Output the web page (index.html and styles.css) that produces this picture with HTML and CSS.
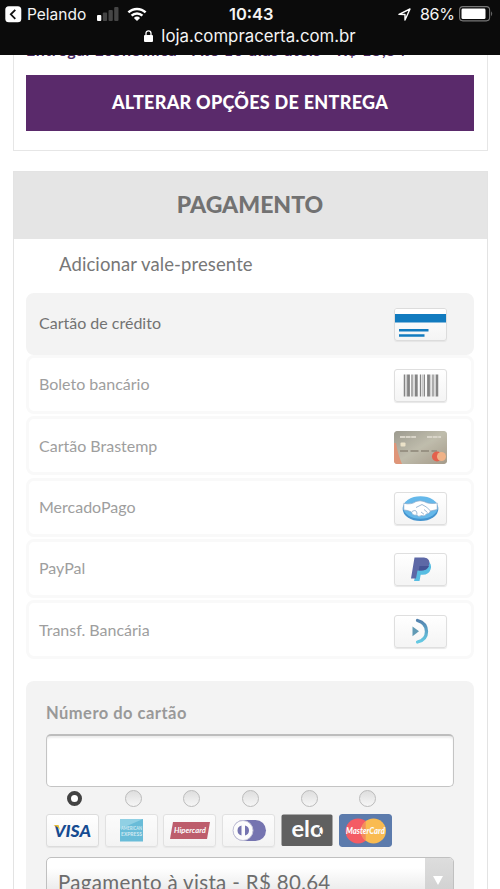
FILE: index.html
```html
<!DOCTYPE html>
<html lang="pt-BR">
<head>
<meta charset="utf-8">
<title>Compra Certa - Pagamento</title>
<link rel="stylesheet" href="styles.css">
</head>
<body>
<header class="browser-bar">
  <div class="status">
    <div class="status-left">
      <svg class="back" width="17" height="17" viewBox="0 0 17 17"><rect x=".3" y=".3" width="16" height="16" rx="3.5" fill="#fff"/><path d="M10.3 3.8 5.8 8.3l4.5 4.5" fill="none" stroke="#111" stroke-width="1.8"/></svg>
      <span class="app">Pelando</span>
      <svg class="signal" width="22" height="14" viewBox="0 0 22 14"><rect y="8" width="4.3" height="6" rx="1" fill="#fff"/><g fill="#454545"><rect x="5.8" y="5.5" width="4.3" height="8.5" rx="1"/><rect x="11.5" y="3" width="4.3" height="11" rx="1"/><rect x="17.2" width="4.3" height="14" rx="1"/></g></svg>
      <svg class="wifi" width="20" height="14" viewBox="0 0 20 14"><g fill="none" stroke="#fff" stroke-width="2.5"><path d="M1.4 5.4a12.3 12.3 0 0 1 17.2 0"/><path d="M4.6 8.7a7.7 7.7 0 0 1 10.8 0"/></g><path d="M6.9 10.9a4.4 4.4 0 0 1 6.2 0L10 14z" fill="#fff"/></svg>
    </div>
    <span class="clock">10:43</span>
    <div class="status-right">
      <svg class="location" width="13" height="13" viewBox="0 0 13 13"><path d="M1 6.4 12 1 7 12V6.5z" fill="none" stroke="#fff" stroke-width="1.4" stroke-linejoin="round"/></svg>
      <span class="percent">86%</span>
      <svg class="battery" width="35" height="16" viewBox="0 0 35 16"><rect x=".6" y=".6" width="30" height="14.3" rx="3.3" fill="none" stroke="#777" stroke-width="1.1"/><rect x="2.5" y="2.5" width="24" height="10.6" rx="1.4" fill="#fff"/><path d="M32.2 5.3q2 2.4 0 4.9z" fill="#777"/></svg>
    </div>
  </div>
  <div class="address">
    <svg width="9" height="12" viewBox="0 0 9 12"><rect y="5" width="9" height="7" rx="1" fill="#fff"/><path d="M2 5.5V3.3a2.5 2.5 0 0 1 5 0v2.2" fill="none" stroke="#fff" stroke-width="1.3"/></svg>
    <span>loja.compracerta.com.br</span>
  </div>
</header>
<main>
  <section class="delivery">
    <p class="shipping">Entrega: Econômica - Até 10 dias úteis - R$ 15,54</p>
    <button class="change"><span>ALTERAR OPÇÕES DE ENTREGA</span></button>
  </section>
  <section class="payment">
    <h2><span>PAGAMENTO</span></h2>
    <p class="voucher"><span>Adicionar vale-presente</span></p>
    <ul class="methods">
      <li class="method selected"><span>Cartão de crédito</span>
        <svg class="tile" viewBox="1 1 51 31"><rect width="53" height="8" fill="#fff"/><rect y="6" width="53" height="8.5" fill="#127bbf"/><path d="M5 22.2h29.500M5 27.500h25.500" stroke="#127bbf" stroke-width="2.500"/></svg></li>
      <li class="method"><span>Boleto bancário</span>
        <svg class="tile" viewBox="1 1 51 31"><g stroke="#777"><path d="M10.500 5.500v22" stroke-width="1.500"/><path d="M14.500 5.500v22M22.300 5.500v22M34.500 5.500v22" stroke-width="2.800"/><path d="M18 5.500v22M26.500 5.500v22M30.300 5.500v22M39 5.500v22" stroke-width="1.300"/><path d="M43 5.500v22" stroke-width="2.500"/></g><path d="M12.300 5.500v22M20 5.500v22M28.500 5.500v22M36.800 5.500v22M41 5.500v22" stroke="#c4c4c4" stroke-width="1.200"/></svg></li>
      <li class="method"><span>Cartão Brastemp</span>
        <svg class="tile full" viewBox="0 0 53 33"><defs><linearGradient id="bronze" x2="1" y2="1"><stop stop-color="#929083"/><stop offset=".5" stop-color="#b9b6a4"/><stop offset="1" stop-color="#9b907d"/></linearGradient></defs><rect width="53" height="33" rx="2.500" fill="url(#bronze)"/><path d="M2 12q2 12 6 21H2q-2 0-2-2V12z" fill="#dc8a6a"/><path d="M6 6h16M33 6h14" stroke="#d5d1c4" stroke-width="2.200" stroke-dasharray="5 .6"/><rect x="6.500" y="11.500" width="5" height="4" rx="1" fill="#e9dfc3"/><path d="M6 20h37" stroke="#8d8776" stroke-width="2" stroke-dasharray="8 2.500"/><circle cx="43" cy="25.500" r="5" fill="#e0503a"/><circle cx="47.500" cy="25.500" r="4.500" fill="#efaa7b"/></svg></li>
      <li class="method"><span>MercadoPago</span>
        <svg class="tile" viewBox="1 1 51 31"><ellipse cx="26.500" cy="17" rx="17.800" ry="12" fill="#3189ca"/><ellipse cx="26.500" cy="15.500" rx="17.200" ry="11.300" fill="#55b1e8"/><path d="M9.800 11.300Q17 13 22 9.500q4-1.500 8 0 5 3 13.200 1.500v6.500L36.500 19q-1 3-4 3-2 3-5 1.500-3 2-5-.500-4 1-5-3-4-2-7.700-2z" fill="#fff" stroke="#7a9fc4" stroke-width=".7"/><path d="m22 15.500 6-3q5 2 8.500 6.500M18 19.500q5-3 5 3M27 20l3 2.300M30 17.500l3.500 3" fill="none" stroke="#7a9fc4" stroke-width=".8"/></svg></li>
      <li class="method"><span>PayPal</span>
        <svg class="tile" viewBox="1 1 51 31"><path d="M25 8h9q4 3 2.700 8-1.700 5.800-8 5.800h-2L25.500 28H20z" fill="#45b6df"/><path d="M20.500 4.500H30q7 1 5 7.500-1.500 5.500-8 5.500h-3.500L22 25.500h-5z" fill="#4c589d"/><path d="M25.500 13h9.500q-2 4.500-8 4.500h-2.300z" fill="#30418a"/></svg></li>
      <li class="method"><span>Transf. Bancária</span>
        <svg class="tile" viewBox="1 1 51 31"><defs><linearGradient id="arc" x2="0" y2="1"><stop stop-color="#4276a6"/><stop offset="1" stop-color="#55c5e1"/></linearGradient></defs><path d="M23.500 5.500Q32.500 8 32.500 16.500T23.500 27" fill="none" stroke="url(#arc)" stroke-width="3.300" stroke-linecap="round"/><path d="m18.500 11.500 6.500 4.700-6.500 5z" fill="#5090ad"/></svg></li>
    </ul>
    <form class="card-form">
      <label class="number-label" for="number"><span>Número do cartão</span></label>
      <input id="number" class="number" type="text">
      <div class="brands">
        <div class="brand on"><i class="radio"></i>
          <svg class="tile" viewBox="1 1 51 31"><text x="8" y="22.5" textLength="37" lengthAdjust="spacingAndGlyphs" class="visa">VISA</text><path d="M7.500 11h5l1.500 5q-2-3.500-6.500-5z" fill="#e5bf32"/></svg></div>
        <div class="brand"><i class="radio"></i>
          <svg class="tile" viewBox="1 1 51 31"><rect x="15" y="5" width="23" height="22.500" fill="#3baad0"/><path d="M15 5h23L15 15z" fill="#6fc5df"/><text x="16" y="16" textLength="21" lengthAdjust="spacingAndGlyphs" class="amex">AMERICAN</text><text x="16" y="21.500" textLength="21" lengthAdjust="spacingAndGlyphs" class="amex">EXPRESS</text></svg></div>
        <div class="brand"><i class="radio"></i>
          <svg class="tile" viewBox="1 1 51 31"><path d="M10 8h37l-3 17H7z" fill="#ac2b40"/><text x="11" y="19" textLength="32" lengthAdjust="spacingAndGlyphs" class="hiper">Hipercard</text></svg></div>
        <div class="brand"><i class="radio"></i>
          <svg class="tile" viewBox="1 1 51 31"><rect x="11" y="6" width="33" height="21" rx="10.500" fill="#4c4a9a"/><circle cx="21" cy="16.500" r="10" fill="#fff" stroke="#b3b2ce"/><path d="M19.500 11.500q-4 1-4 5t4 5zM23 11.500q4 1 4 5t-4 5z" fill="#4c4a9a"/></svg></div>
        <div class="brand"><i class="radio"></i>
          <svg class="tile full" viewBox="0 0 53 33"><rect x=".5" y=".5" width="51" height="31.500" rx="1.500" fill="#303030"/><text x="10.500" y="23" textLength="32" lengthAdjust="spacingAndGlyphs" class="elo">elo</text><path d="m38 14 4-3.500M39 19.500l4 4" stroke="#303030" stroke-width="1.300"/></svg></div>
        <div class="brand"><i class="radio"></i>
          <svg class="tile full" viewBox="0 0 53 33"><rect width="53" height="33" rx="3" fill="#2a5395"/><circle cx="19" cy="17" r="12.500" fill="#f52a35"/><circle cx="34.500" cy="17" r="12.500" fill="#fca91b"/><path d="M26.700 7.200q-5 4-5 9.800t5 9.800" fill="#f56b2b"/><text x="7" y="20" textLength="39" lengthAdjust="spacingAndGlyphs" class="master">MasterCard</text></svg></div>
      </div>
      <div class="select"><span class="option">Pagamento à vista - R$ 80,64</span><span class="arrow"></span></div>
    </form>
  </section>
</main>
</body>
</html>
```

FILE: styles.css
```css
* { box-sizing: border-box; }
html, body { height: 889px; overflow: hidden; }
body { margin: 0; background: #fff; font-family: Lato, "Liberation Sans", sans-serif; color: #727272; }
main { height: 834px; padding: 0 12.5px; overflow: hidden; }
svg { display: block; flex: none; }

.browser-bar { height: 55px; background: #0b0b0b; color: #f4f4f4; font-family: Inter, sans-serif; }
.status { height: 28px; display: grid; grid-template-columns: 1fr 46px 1fr; align-items: center; font-size: 16px; }
.status-left, .status-right { display: flex; align-items: center; }
.status-left { padding-left: 5px; }
.app { width: 60px; margin: 0 10px 0 5px; font-size: 15.5px; white-space: nowrap; }
.wifi { margin-left: 8px; }
.clock { padding-left: 2px; text-align: center; font-size: 16.5px; font-weight: 600; white-space: nowrap; }
.status-right { justify-content: flex-end; padding-right: 6px; }
.percent { width: 34px; margin: 0 5px 0 9px; white-space: nowrap; letter-spacing: -.3px; }
.address { display: flex; justify-content: center; align-items: center; gap: 8px; height: 16px; font-size: 16.8px; line-height: 16px; }

.delivery { height: 96px; border: solid #e6e6e6; border-width: 0 1px 1px; padding: 0 12.5px; overflow: hidden; }
.shipping { margin: -14px 0 16px; height: 18px; line-height: 18px; font-size: 16px; font-weight: 700; color: #4b2a61; white-space: nowrap; letter-spacing: .63px; }
.change { display: block; width: 100%; height: 56px; border: 0; padding: 0 0 2px; background: #5a2a6b; color: #fff; font: 900 18px Lato, sans-serif; letter-spacing: .28px; }
.payment { margin-top: 20px; border: 1px solid #e3e3e3; height: 760px; padding: 0 12.5px; }
.payment h2 { margin: 0 -12.5px; height: 67px; padding-bottom: 3px; display: flex; align-items: center; justify-content: center; background: #e5e5e5; font-size: 23px; font-weight: 900; }
.voucher { margin: 0; height: 54px; padding: 0 0 5px 33px; display: flex; align-items: center; font-size: 18.5px; letter-spacing: .1px; color: #777; }
.methods { list-style: none; margin: 0; padding: 0; display: grid; grid-template-rows: 59.7px repeat(5, 59px); row-gap: 2.3px; }
.method { display: flex; align-items: center; justify-content: space-between; padding: 3px 24px 0 10px; border: 3px solid #f9f9f9; border-radius: 8px; font-size: 16px; color: #9e9e9e; }
.method span { padding-bottom: 4px; }
.method.selected { height: 62px; padding-top: 1px; background: #f3f3f3; border-color: #f3f3f3; color: #727272; }
.tile { width: 53px; height: 33px; border: 1px solid #dcdcdc; border-radius: 3px; background: linear-gradient(#fff, #f4f4f4); box-shadow: 0 1px 1px #e5e5e5; }
.method .tile { opacity: .9; }
.method.selected .tile { opacity: 1; }
.tile.full { border: 0; background: none; box-shadow: none; }

.card-form { height: 230px; margin-top: 22px; padding: 0 20px; background: #f3f3f3; border-radius: 8px; }
.number-label { height: 53px; display: flex; align-items: center; padding-top: 11px; font-size: 16.5px; font-weight: 700; letter-spacing: .48px; color: #999; }
.number { display: block; width: 100%; height: 53px; border: 1px solid #c4c4c4; border-top: 2px solid #bdbdbd; border-radius: 5px; background: #fff; box-shadow: inset 0 2px 2px #eee; }
.brands { display: grid; grid-template-columns: repeat(6, 53px); column-gap: 5.7px; margin-top: 3px; }
.brand { display: flex; flex-direction: column; align-items: center; gap: 7px; }
.radio { width: 17px; height: 17px; margin-left: 4px; border: 1px solid #bbb; border-radius: 50%; background: linear-gradient(#dedede, #f6f6f6); }
.on .radio { width: 15px; height: 15px; margin: 1px 0 1px 4px; border: 4.5px solid #424242; background: #fff; }
.brand:not(.on) .tile { opacity: .75; }
.select { height: 51px; margin-top: 10px; display: flex; justify-content: space-between; border: 1px solid #c0c0c0; border-radius: 5px; background: linear-gradient(#fff 20%, #ddd); overflow: hidden; }
.option { padding: 10px 0 0 11px; font-size: 20.5px; line-height: 28px; letter-spacing: .33px; color: #6d6d6d; white-space: nowrap; }
.arrow { width: 28px; background: linear-gradient(#ddd, #ccc); }
.arrow::before { content: ""; display: block; margin: 18px 0 0 8px; width: 0; border: solid transparent; border-width: 9px 5px 0; border-top-color: #fff; }
.visa { font: italic 900 17px Lato, sans-serif; fill: #164b91; }
.amex { font: 700 5px Lato, sans-serif; fill: #c6e6f0; }
.hiper { font: italic 700 8px Lato, sans-serif; fill: #fff; }
.elo { font: 700 23px Lato, sans-serif; fill: #fff; }
.master { font: italic 900 8.5px Lato, sans-serif; fill: #fff; }
```
